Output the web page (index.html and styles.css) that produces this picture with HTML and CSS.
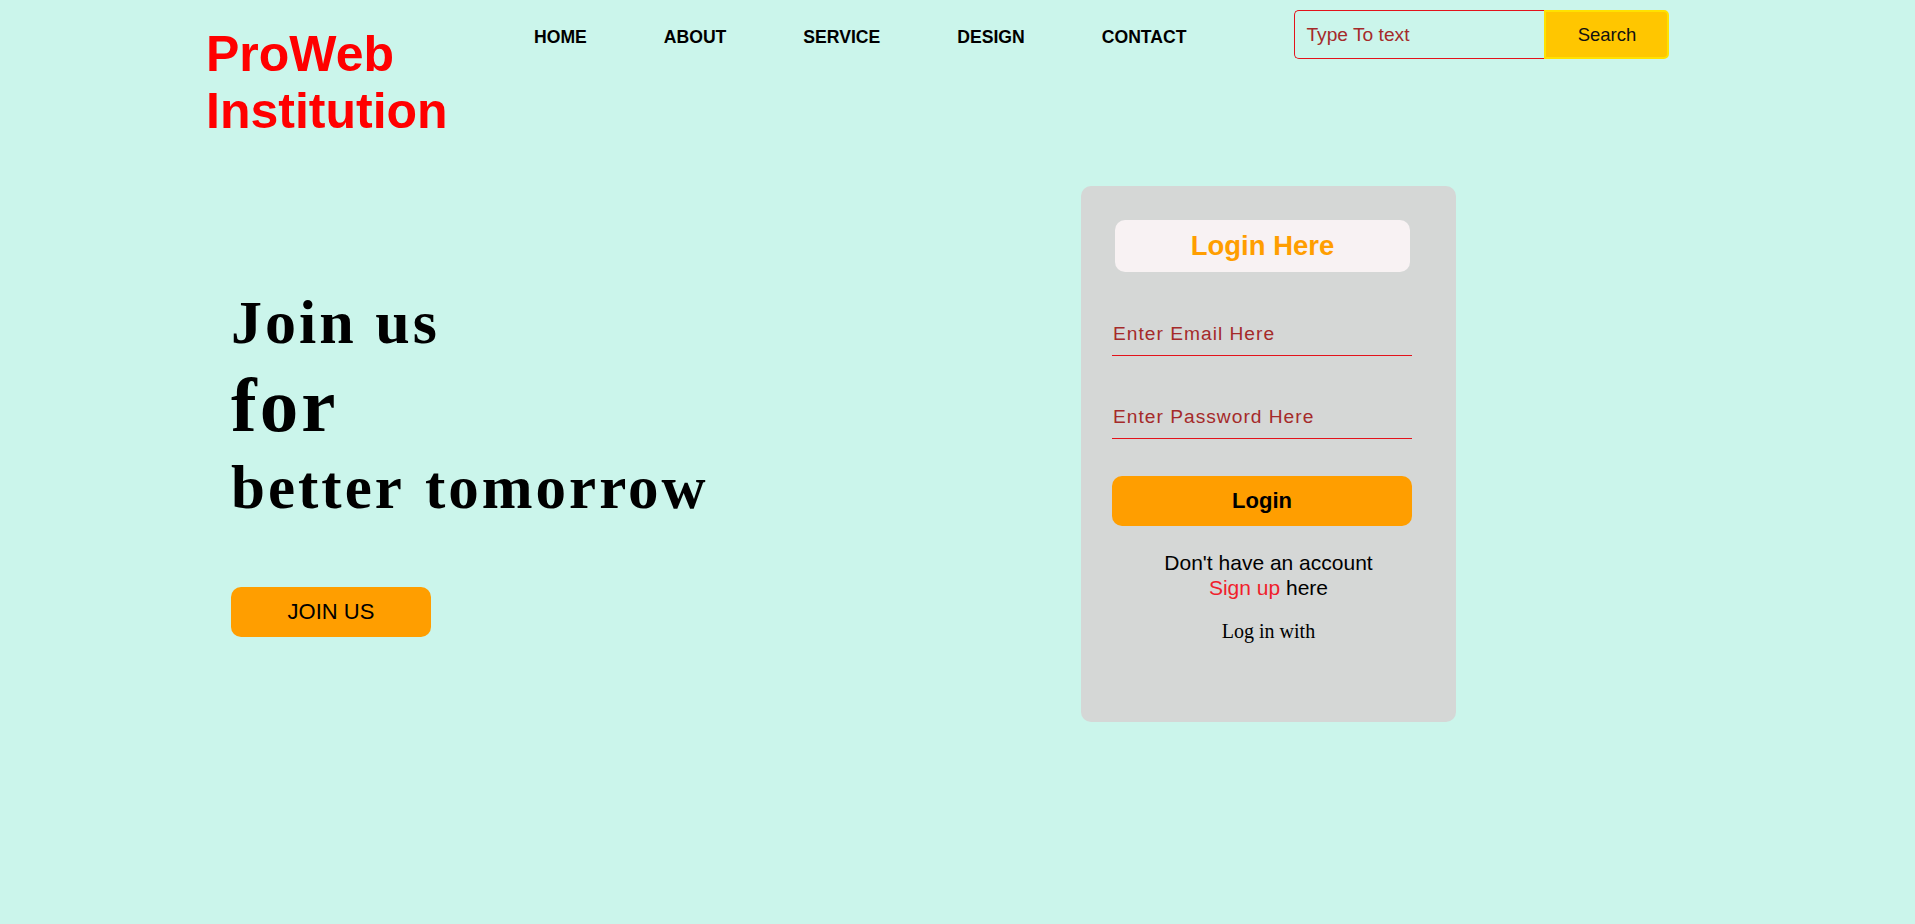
FILE: index.html
```html
<!DOCTYPE html>
<html lang="en">
<head>
<meta charset="utf-8">
<title>ProWeb Institution</title>
<link rel="stylesheet" href="styles.css">
</head>
<body>
<header class="header">
  <div class="logo">ProWeb<br>Institution</div>
  <nav class="nav">
    <a class="nav-link" href="#">HOME</a>
    <a class="nav-link" href="#">ABOUT</a>
    <a class="nav-link" href="#">SERVICE</a>
    <a class="nav-link" href="#">DESIGN</a>
    <a class="nav-link" href="#">CONTACT</a>
  </nav>
  <form class="search">
    <input class="search-input" type="text" placeholder="Type To text">
    <button class="search-btn" type="button">Search</button>
  </form>
</header>
<main class="main">
  <section class="hero">
    <div class="hero-l1">Join us</div>
    <div class="hero-l2">for</div>
    <div class="hero-l3">better tomorrow</div>
    <button class="join-btn" type="button">JOIN US</button>
  </section>
  <section class="card">
    <div class="card-title">Login Here</div>
    <input class="field field-email" type="email" placeholder="Enter Email Here">
    <input class="field field-pass" type="password" placeholder="Enter Password Here">
    <button class="login-btn" type="button">Login</button>
    <p class="signup">Don't have an account<br><a class="signup-link" href="#">Sign up</a> here</p>
    <p class="login-with">Log in with</p>
  </section>
</main>
</body>
</html>
```

FILE: styles.css
```css
html, body {
  margin: 0;
  padding: 0;
}
body {
  background: #cbf5eb;
  font-family: "Liberation Sans", Arial, sans-serif;
  width: 1915px;
  height: 924px;
  overflow: hidden;
}
.header {
  display: flex;
  align-items: flex-start;
  padding-left: 206px;
  height: 140px;
  box-sizing: border-box;
}
.logo {
  width: 328px;
  margin-top: 26px;
  font-size: 50px;
  line-height: 57px;
  font-weight: bold;
  color: #ff0000;
}
.nav {
  display: flex;
  gap: 77px;
  margin-top: 27px;
}
.nav-link {
  font-size: 17.6px;
  font-weight: bold;
  color: #000;
  text-decoration: none;
  line-height: 20px;
}
.search {
  display: flex;
  margin: 10px 0 0 108px;
}
.search-input {
  width: 250px;
  height: 49px;
  box-sizing: border-box;
  border: 1px solid #e3121b;
  border-right: none;
  border-radius: 5px 0 0 5px;
  background: transparent;
  padding: 0 0 0 11px;
  font-family: "Liberation Sans", Arial, sans-serif;
  font-size: 19.2px;
  outline: none;
}
.search-input::placeholder {
  color: #a52a2a;
  opacity: 1;
}
.search-btn {
  width: 125px;
  height: 49px;
  box-sizing: border-box;
  border: 2px solid #ffe200;
  border-radius: 0 5px 5px 0;
  background: #ffc600;
  color: #111;
  font-family: "Liberation Sans", Arial, sans-serif;
  font-size: 18.5px;
  padding: 0;
}
.main {
  display: flex;
  align-items: flex-start;
  padding-left: 231px;
}
.hero {
  width: 850px;
  margin-top: 146px;
  font-family: "Liberation Serif", "Times New Roman", serif;
  font-weight: bold;
  letter-spacing: 3px;
  color: #000;
}
.hero-l1 {
  font-size: 62px;
  line-height: 72px;
}
.hero-l2 {
  font-size: 77px;
  line-height: 94px;
}
.hero-l3 {
  font-size: 61px;
  line-height: 72px;
  word-spacing: 3px;
}
.join-btn {
  display: block;
  margin-top: 63px;
  width: 200px;
  height: 50px;
  border: none;
  border-radius: 10px;
  background: #ff9e00;
  color: #000;
  font-family: "Liberation Sans", Arial, sans-serif;
  font-size: 22px;
  padding: 0;
}
.card {
  display: flex;
  flex-direction: column;
  align-items: flex-start;
  width: 375px;
  height: 536px;
  box-sizing: border-box;
  margin-top: 46px;
  padding-top: 34px;
  background: #d5d7d6;
  border-radius: 10px;
}
.card-title {
  margin-left: 34px;
  width: 295px;
  height: 52px;
  line-height: 52px;
  border-radius: 10px;
  background: #f8f2f3;
  color: #ff9e00;
  font-size: 27.5px;
  font-weight: bold;
  text-align: center;
}
.field {
  margin-left: 31px;
  width: 300px;
  height: 44px;
  box-sizing: border-box;
  border: none;
  border-bottom: 1px solid #e3121b;
  background: transparent;
  padding: 0 0 0 1px;
  font-family: "Liberation Sans", Arial, sans-serif;
  font-size: 19.2px;
  letter-spacing: 1px;
  outline: none;
}
.field::placeholder {
  color: #a52a2a;
  opacity: 1;
}
.field-email {
  margin-top: 40px;
}
.field-pass {
  margin-top: 39px;
}
.login-btn {
  margin: 37px 0 0 31px;
  width: 300px;
  height: 50px;
  border: none;
  border-radius: 10px;
  background: #ff9e00;
  color: #000;
  font-family: "Liberation Sans", Arial, sans-serif;
  font-size: 22px;
  font-weight: bold;
  padding: 0;
}
.signup {
  align-self: stretch;
  margin: 24px 0 0;
  font-size: 21px;
  line-height: 25px;
  text-align: center;
  color: #000;
}
.signup-link {
  color: #f01e2c;
  text-decoration: none;
}
.login-with {
  align-self: stretch;
  margin: 20px 0 0;
  font-family: "Liberation Serif", "Times New Roman", serif;
  font-size: 20px;
  line-height: 23px;
  text-align: center;
  color: #000;
}
```
